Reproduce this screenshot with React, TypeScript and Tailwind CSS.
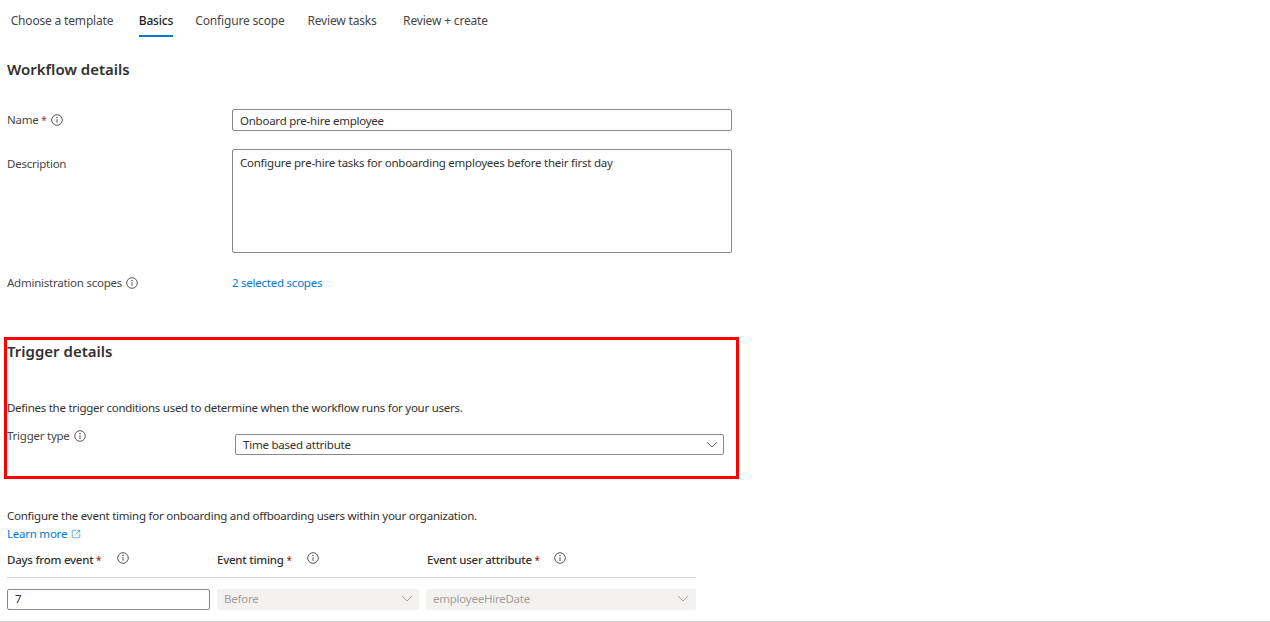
import { SquareArrowOutUpRight } from "lucide-react"

const tabs = [
    { label: "Choose a template", left: "ml-[10px]", width: "w-[104px]" },
    { label: "Basics", left: "ml-[25px]", width: "w-[34px]", active: true },
    { label: "Configure scope", left: "ml-[22px]", width: "w-[90px]" },
    { label: "Review tasks", left: "ml-[22px]", width: "w-[70px]" },
    { label: "Review + create", left: "ml-[24px]", width: "w-[89px]" },
]

const InfoIcon = () => (
    <svg width="12" height="12" viewBox="0 0 12 12" fill="none" stroke="#444444" strokeWidth="0.9" className="shrink-0">
        <circle cx="6" cy="6" r="5.3" />
        <path d="M6 5.2V8.8" />
        <circle cx="6" cy="3.5" r="0.35" fill="#444444" />
    </svg>
)

const Chevron = ({ color }: { color: string }) => (
    <svg width="12" height="7" viewBox="0 0 12 7" fill="none" stroke={color} strokeWidth="0.9" className="shrink-0">
        <path d="M1 1L6 6L11 1" />
    </svg>
)

const Star = () => <span className="text-[10px] text-[#a4262c]">*</span>

const App = () => {
    return (
        <div className="h-[622px] w-[1270px] overflow-hidden bg-white font-['Noto_Sans',sans-serif] text-[11.5px] leading-[16px] tracking-[-0.24px] text-[#323130]">
            {/* Tabs */}
            <div className="flex h-[38px] items-start text-[12px] tracking-[-0.17px]">
                {tabs.map((tab) => (
                    <div
                        key={tab.label}
                        className={`${tab.left} ${tab.width} flex h-[38px] flex-col items-center whitespace-nowrap pt-[13px] ${tab.active ? "font-medium text-[#201f1e]" : "text-[#484644]"}`}
                    >
                        <span className="h-[22px]">{tab.label}</span>
                        {tab.active && <div className="h-[2px] w-full bg-[#0078d4]" />}
                    </div>
                ))}
            </div>

            <div className="pl-[4px]">
                <div className="pl-[3px]">
                    <h2 className="mt-[21px] text-[15px] font-semibold leading-[20px] tracking-normal">Workflow details</h2>

                    {/* Name */}
                    <div className="mt-[30px] flex">
                        <div className="flex h-[22px] w-[225px] items-center gap-[4px] text-[#484644]">
                            <span>Name <Star /></span>
                            <InfoIcon />
                        </div>
                        <div className="flex h-[22px] w-[500px] items-center rounded-[2px] border border-[#8a8886] px-[7px] pt-[1px]">
                            Onboard pre-hire employee
                        </div>
                    </div>

                    {/* Description */}
                    <div className="mt-[18px] flex">
                        <div className="w-[225px] pt-[7px] text-[#484644]">Description</div>
                        <div className="h-[104px] w-[500px] rounded-[2px] border border-[#8a8886] px-[7px] pt-[5px]">
                            Configure pre-hire tasks for onboarding employees before their first day
                        </div>
                    </div>

                    {/* Scopes */}
                    <div className="mt-[22px] flex">
                        <div className="flex h-[16px] w-[225px] items-center gap-[4px] text-[#484644]">
                            <span>Administration scopes</span>
                            <InfoIcon />
                        </div>
                        <a className="text-[#0078d4]">2 selected scopes</a>
                    </div>
                </div>

                {/* Trigger details, boxed in red */}
                <div className="mt-[46px] h-[142px] w-[735px] border-[3px] border-[#ff0000]">
                    <h2 className="mt-[1px] text-[15px] font-semibold leading-[20px] tracking-normal">Trigger details</h2>
                    <p className="mt-[39px] tracking-[-0.27px]">Defines the trigger conditions used to determine when the workflow runs for your users.</p>
                    <div className="mt-[11px] flex">
                        <div className="flex h-[18px] w-[228px] items-center gap-[4px] text-[#484644]">
                            <span>Trigger type</span>
                            <InfoIcon />
                        </div>
                        <div className="mt-[7px] flex h-[21px] w-[489px] items-center justify-between rounded-[2px] border border-[#8a8886] pl-[7px] pr-[5px]">
                            Time based attribute
                            <Chevron color="#605e5c" />
                        </div>
                    </div>
                </div>

                {/* Event timing */}
                <div className="pl-[3px]">
                    <p className="mt-[29px]">Configure the event timing for onboarding and offboarding users within your organization.</p>
                    <a className="mt-[2px] flex items-center gap-[4px] text-[#0078d4]">
                        Learn more
                        <SquareArrowOutUpRight size={10} strokeWidth={1.4} />
                    </a>

                    <div className="mt-[10px] w-[689px]">
                        <div className="flex h-[26px] border-b border-[#d6d6d6] font-medium text-[#323130]">
                            <div className="flex w-[210px] items-start gap-[16px]">
                                <span>Days from event <Star /></span>
                                <InfoIcon />
                            </div>
                            <div className="flex w-[210px] items-start gap-[15px]">
                                <span>Event timing <Star /></span>
                                <InfoIcon />
                            </div>
                            <div className="flex items-start gap-[14px]">
                                <span>Event user attribute <Star /></span>
                                <InfoIcon />
                            </div>
                        </div>
                        <div className="mt-[11px] flex gap-[7px]">
                            <div className="flex h-[21px] w-[203px] items-center rounded-[2px] border border-[#8a8886] px-[7px] pb-[1px]">7</div>
                            <div className="flex h-[21px] w-[202px] items-center justify-between rounded-[2px] bg-[#f3f2f1] pb-[2px] pl-[7px] pr-[6px] text-[#a19f9d]">
                                Before
                                <Chevron color="#a19f9d" />
                            </div>
                            <div className="flex h-[21px] w-[270px] items-center justify-between rounded-[2px] bg-[#f3f2f1] pb-[2px] pl-[7px] pr-[7px] text-[#a19f9d]">
                                employeeHireDate
                                <Chevron color="#a19f9d" />
                            </div>
                        </div>
                    </div>
                </div>
            </div>

            <div className="mt-[11px] h-px w-full bg-[#d6d6d6]" />
        </div>
    )
}

export default App
